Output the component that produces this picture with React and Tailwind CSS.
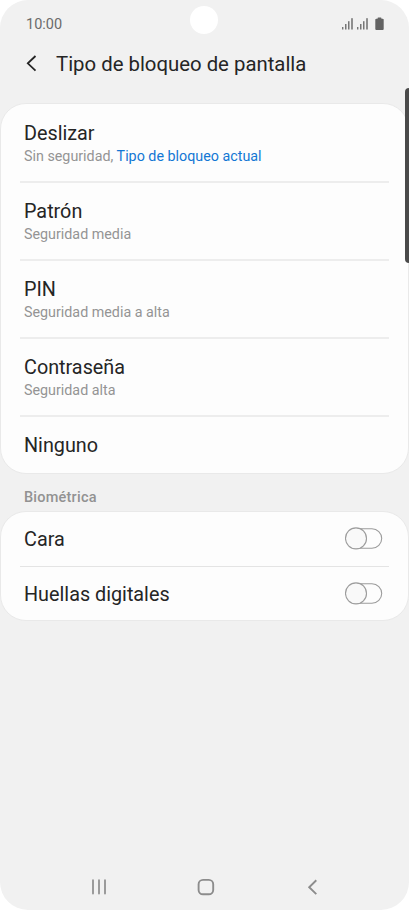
import React, { useState } from 'react';

const lockTypes = [
    { label: 'Deslizar', detail: 'Sin seguridad,', current: 'Tipo de bloqueo actual' },
    { label: 'Patrón', detail: 'Seguridad media' },
    { label: 'PIN', detail: 'Seguridad media a alta' },
    { label: 'Contraseña', detail: 'Seguridad alta' },
    { label: 'Ninguno' },
];

const biometrics = [
    { id: 'face', label: 'Cara' },
    { id: 'fingerprint', label: 'Huellas digitales' },
];

const Signal = () => (
    <svg width="12" height="13" viewBox="0 0 12 13" fill="#777777">
        <rect x="0" y="10" width="1.4" height="2.5" />
        <rect x="3" y="7" width="1.5" height="5.5" />
        <rect x="6" y="4.2" width="1.5" height="8.3" />
        <rect x="9.2" y="1.2" width="1.6" height="11.3" />
    </svg>
);

const Battery = () => (
    <svg width="9" height="13" viewBox="0 0 9 13" fill="#636363">
        <rect x="2.6" y="0.4" width="3.8" height="3" rx="0.6" />
        <rect x="0.3" y="1.7" width="8.4" height="11.2" rx="1" />
    </svg>
);

const Toggle = ({ checked, onChange, label }) => (
    <button
        role="switch"
        aria-checked={checked}
        aria-label={label}
        onClick={onChange}
        className="w-[38px] h-6 shrink-0"
    >
        <svg width="38" height="24" viewBox="0 0 38 24" stroke="#9c9c9c" strokeWidth="1.1">
            <rect x="1.5" y="1.7" width="35.2" height="19.6" rx="9.8" fill={checked ? '#0072de' : '#fdfdfd'} />
            <circle cx={checked ? 26.5 : 11} cy="11.4" r="10.5" fill="#f9f9f9" />
        </svg>
    </button>
);

const App = () => {
    const [enabled, setEnabled] = useState({});

    const toggle = (id) => setEnabled((prev) => ({ ...prev, [id]: !prev[id] }));

    return (
        <div className="bg-white font-['Roboto',sans-serif] text-[#252525]">
            <div className="relative w-[409px] h-[910px] bg-[#f1f1f1] rounded-[28px] overflow-hidden flex flex-col">
                {/* Status bar */}
                <div className="h-10 shrink-0 flex items-start justify-between pl-[26px] pr-[25px] text-[#6b6b6b]">
                    <span className="mt-[15px] text-[14.5px] leading-5">10:00</span>
                    <div className="mt-[17px] flex items-start">
                        <Signal />
                        <span className="ml-[3px]"><Signal /></span>
                        <span className="ml-[6px]"><Battery /></span>
                    </div>
                </div>
                <div className="absolute left-[190px] top-[6px] size-7 rounded-full bg-white"></div>

                {/* Header */}
                <header className="h-[63px] shrink-0 flex items-start pl-[26px]">
                    <button className="mt-[15px]" aria-label="Atrás">
                        <svg width="11" height="17" viewBox="0 0 11 17" fill="none" stroke="#252525" strokeWidth="1.8">
                            <path d="M9.5 1 L1.8 8.3 L9.5 15.6" />
                        </svg>
                    </button>
                    <h1 className="ml-[19px] mt-3 text-[20.35px] leading-6">Tipo de bloqueo de pantalla</h1>
                </header>

                {/* Lock types */}
                <section className="shrink-0 rounded-[26px] border border-[#e9e9e9] bg-[#fdfdfd] px-[19px]">
                    {lockTypes.map((item) => (
                        <div
                            key={item.label}
                            className="h-[78px] px-1 pt-[17px] border-b-2 border-[#ededed] first:h-[79px] first:pt-[18px] last:h-14 last:border-b-0"
                        >
                            <p className="text-[19.8px] leading-6">{item.label}</p>
                            {item.detail && (
                                <p className="mt-px text-[14.3px] leading-[18px] text-[#949494]">
                                    {item.detail} {item.current && <span className="text-[#1377d4]">{item.current}</span>}
                                </p>
                            )}
                        </div>
                    ))}
                </section>

                <h2 className="h-[37px] shrink-0 pl-6 pt-[15px] text-[14.5px] leading-[18px] tracking-[0.22px] font-medium text-[#929292]">
                    Biométrica
                </h2>

                {/* Biometrics */}
                <section className="shrink-0 rounded-[26px] border border-[#e9e9e9] bg-[#fdfdfd] px-[19px]">
                    {biometrics.map((item) => (
                        <div
                            key={item.id}
                            className="h-[55px] pl-1 pr-[6px] flex items-center justify-between border-b border-[#e4e4e4] last:h-[53px] last:border-b-0"
                        >
                            <span className="pt-0.5 text-[19.8px] leading-6">{item.label}</span>
                            <Toggle
                                label={item.label}
                                checked={!!enabled[item.id]}
                                onChange={() => toggle(item.id)}
                            />
                        </div>
                    ))}
                </section>

                {/* Navigation bar */}
                <nav className="mt-auto h-[46px] shrink-0 flex items-start justify-between pl-[91px] pr-[90px]">
                    <button aria-label="Recientes" className="mt-[15px]">
                        <svg width="16" height="16" viewBox="0 0 16 16" fill="none" stroke="#8c8c8c" strokeWidth="1.7" strokeLinecap="round">
                            <path d="M2 1.2V14.6M8 1.2V14.6M14 1.2V14.6" />
                        </svg>
                    </button>
                    <button aria-label="Inicio" className="mt-[14px] mr-[3px]">
                        <svg width="18" height="18" viewBox="0 0 18 18" fill="none" stroke="#8c8c8c" strokeWidth="1.9">
                            <rect x="1.6" y="1.9" width="14.6" height="14.4" rx="4.4" />
                        </svg>
                    </button>
                    <button aria-label="Volver" className="mt-[15px]">
                        <svg width="12" height="16" viewBox="0 0 12 16" fill="none" stroke="#8c8c8c" strokeWidth="1.9">
                            <path d="M9.3 1.3 L2.2 8.2 L9.3 15.1" />
                        </svg>
                    </button>
                </nav>

                {/* Side key of the phone */}
                <div className="absolute right-[-6px] top-[88px] w-[10px] h-[175px] rounded-[4px] bg-[#4a4a4a]"></div>
            </div>
        </div>
    );
};

export default App;
